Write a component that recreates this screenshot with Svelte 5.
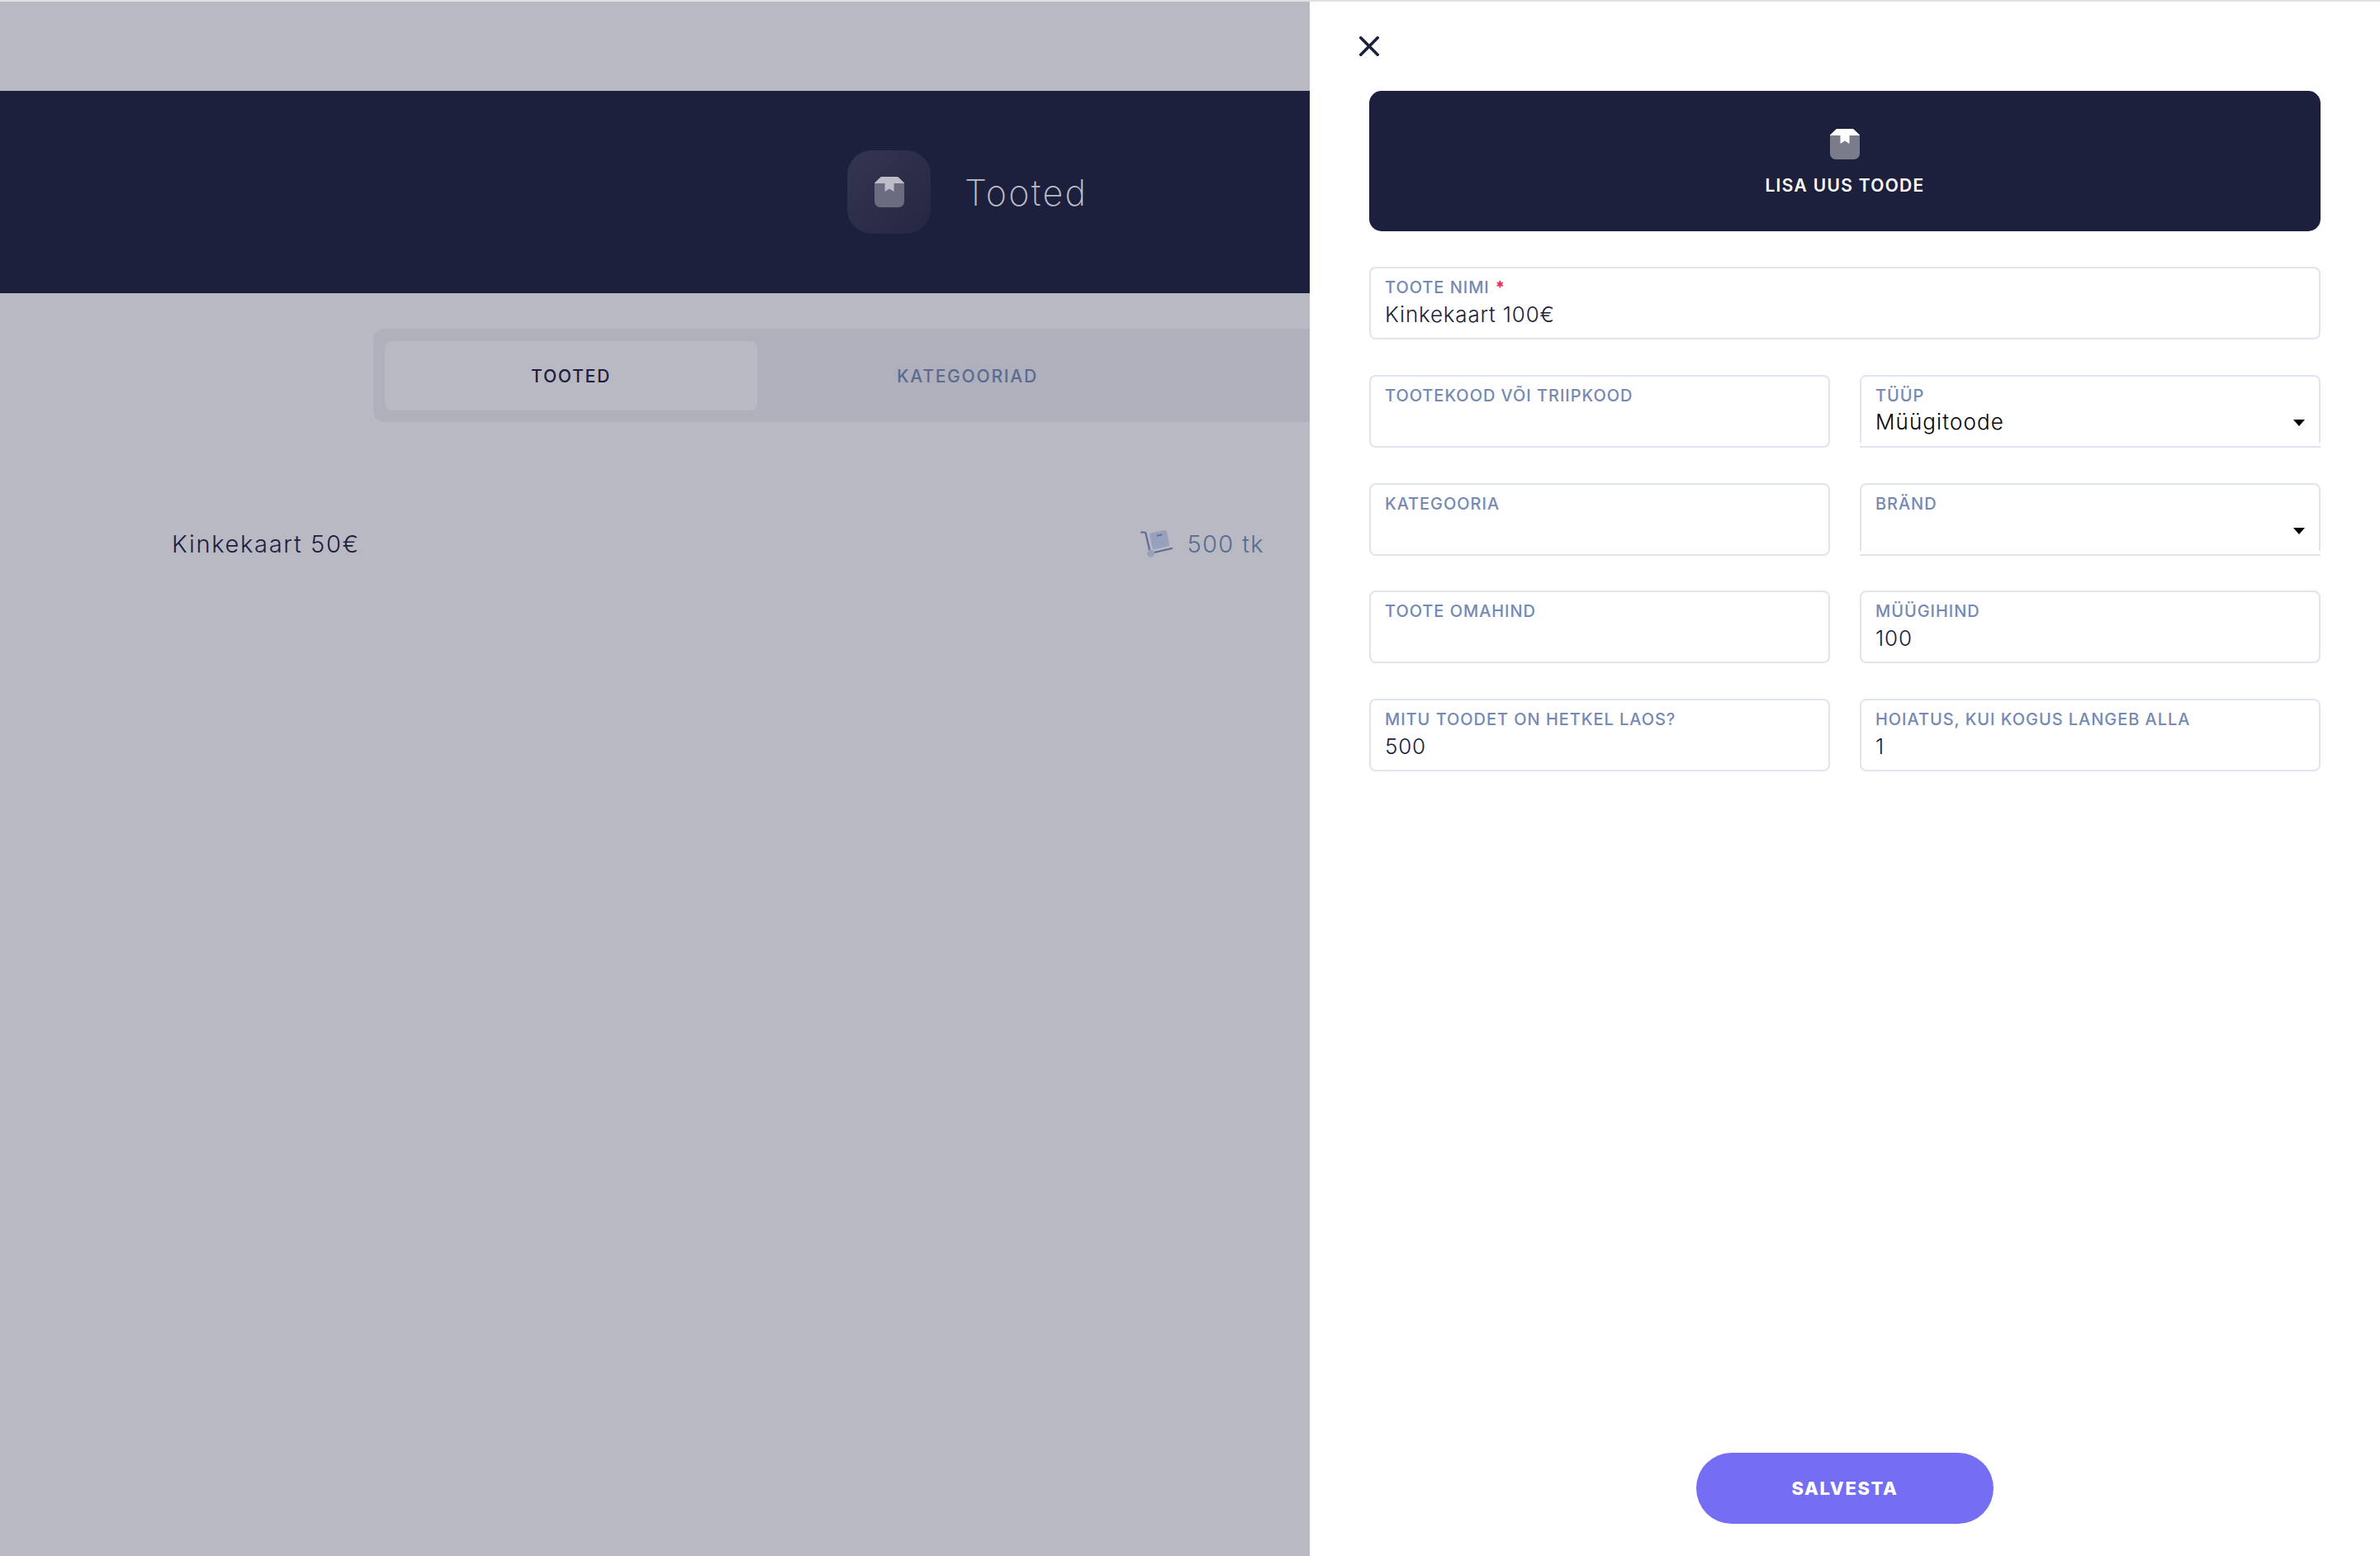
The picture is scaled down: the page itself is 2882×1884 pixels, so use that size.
<script lang="ts">
	const rows = [
		[{ label: 'TOOTE NIMI', value: 'Kinkekaart 100€', required: true, wide: true }],
		[
			{ label: 'TOOTEKOOD VÕI TRIIPKOOD', value: '' },
			{ label: 'TÜÜP', value: 'Müügitoode', select: true }
		],
		[
			{ label: 'KATEGOORIA', value: '' },
			{ label: 'BRÄND', value: '', select: true }
		],
		[
			{ label: 'TOOTE OMAHIND', value: '' },
			{ label: 'MÜÜGIHIND', value: '100' }
		],
		[
			{ label: 'MITU TOODET ON HETKEL LAOS?', value: '500' },
			{ label: 'HOIATUS, KUI KOGUS LANGEB ALLA', value: '1' }
		]
	];
</script>

{#snippet boxIcon(body, lid)}
	<svg class="box" viewBox="0 0 36 37" aria-hidden="true">
		<path d="M0 8h36v22a7 7 0 0 1-7 7H7a7 7 0 0 1-7-7z" fill={body} />
		<path d="M9 0h18a3 3 0 0 1 2.300 1L36 7.500V8H23.500v10l-5.500-3.500L12.500 18V8H0v-.5L6.700 1A3 3 0 0 1 9 0z" fill={lid} />
	</svg>
{/snippet}

<div class="screen">
	<main class="page">
		<header class="hero">
			<div class="tile">{@render boxIcon('#6b6c80', '#bdbdc9')}</div>
			<h1>Tooted</h1>
		</header>

		<nav class="tabs">
			<button class="tab active">TOOTED</button>
			<button class="tab">KATEGOORIAD</button>
		</nav>

		<div class="product">
			<span class="name">Kinkekaart 50€</span>
			<span class="stock">
				<svg viewBox="0 0 40 33" width="40" height="33" aria-hidden="true">
					<rect x="12.500" y="1.500" width="21" height="20" rx="2.500" transform="rotate(-12 23 11)" fill="#97a1bb" />
					<path d="M20.500 6.500l5-1" stroke="#5f7096" stroke-width="2" stroke-linecap="round" />
					<path d="M1 2.500h3.500a2 2 0 0 1 2 1.600L11.500 26M14 27.500L38 22" fill="none" stroke="#5a6c94" stroke-width="2.200" stroke-linecap="round" />
					<circle cx="12.500" cy="28" r="4.500" fill="#97a1bb" />
				</svg>
				<span class="qty">500 tk</span>
			</span>
		</div>
	</main>

	<aside class="drawer">
		<button class="close" aria-label="Sulge">
			<svg viewBox="0 0 24 24" width="24" height="24" aria-hidden="true">
				<path d="M1.800 1.800l20.400 20.400M22.200 1.800L1.800 22.200" stroke="#1c2040" stroke-width="3.600" stroke-linecap="round" />
			</svg>
		</button>

		<div class="banner">
			{@render boxIcon('#7a7c8c', '#ffffff')}
			<span>LISA UUS TOODE</span>
		</div>

		<form class="form">
			{#each rows as row}
				<div class="row">
					{#each row as field}
						<div class="field" class:select={field.select}>
							<span class="label">
								{field.label}{#if field.required}<b class="star">*</b>{/if}
							</span>
							<span class="value">{field.value}</span>
							{#if field.select}<i class="arrow"></i>{/if}
						</div>
					{/each}
				</div>
			{/each}
		</form>

		<button class="save">SALVESTA</button>
	</aside>
</div>

<style>
	:global(body) {
		margin: 0;
		background: #b9b9c4;
	}

	.screen {
		display: flex;
		width: 2882px;
		height: 1884px;
		box-sizing: border-box;
		border-top: 2px solid #e0e0e0;
		overflow: hidden;
		font-family: Inter, 'Noto Sans', sans-serif;
		color: #1c203d;
	}

	button {
		font-family: inherit;
		border: 0;
		padding: 0;
		background: none;
	}

	.page {
		width: 1586px;
		flex: none;
		overflow: hidden;
		background: #b9b9c4;
		padding-top: 108px;
		box-sizing: border-box;
	}

	.hero {
		height: 245px;
		background: #1c203d;
		display: flex;
		align-items: center;
		padding: 0 0 0 1026px;
		box-sizing: border-box;
		gap: 41px;
	}

	.tile {
		width: 101px;
		height: 101px;
		border-radius: 30px;
		background: linear-gradient(135deg, #34354f, #252642);
		display: flex;
		align-items: center;
		justify-content: center;
	}

	.box {
		width: 36px;
		height: 37px;
		display: block;
	}

	h1 {
		margin: 0;
		font-size: 43px;
		font-weight: 200;
		color: #bdbdc9;
		letter-spacing: 2.300px;
	}

	.tabs {
		display: flex;
		gap: 29px;
		width: 1200px;
		height: 113px;
		box-sizing: border-box;
		margin: 43px 0 0 452px;
		padding: 15px 14px 14px;
		border-radius: 14px;
		background: #afb0bc;
	}

	.tab {
		width: 451px;
		flex: none;
		border-radius: 8px;
		font-size: 21px;
		font-weight: 500;
		letter-spacing: 1.800px;
		color: #5a6b90;
	}

	.tab.active {
		background: #b9b9c4;
		color: #1c203d;
	}

	.product {
		display: flex;
		justify-content: space-between;
		align-items: center;
		margin-top: 125px;
		padding: 0 55px 0 208px;
		font-size: 29px;
		font-weight: 350;
		height: 44px;
	}

	.name {
		letter-spacing: 1.700px;
	}

	.stock {
		display: flex;
		align-items: center;
		gap: 16px;
		color: #5a6b90;
	}

	.qty {
		letter-spacing: 1.400px;
		font-weight: 300;
	}

	.drawer {
		flex: 1;
		position: relative;
		display: flex;
		flex-direction: column;
		background: #fff;
		box-sizing: border-box;
		padding: 108px 72px 39px;
	}

	.close {
		position: absolute;
		left: 60px;
		top: 42px;
		width: 24px;
		height: 24px;
	}

	.close svg {
		display: block;
	}

	.banner {
		height: 170px;
		flex: none;
		border-radius: 15px;
		background: #1c203d;
		color: #fff;
		display: flex;
		flex-direction: column;
		align-items: center;
		padding-top: 46px;
		box-sizing: border-box;
		gap: 19px;
	}

	.banner span {
		font-size: 21px;
		font-weight: 600;
		line-height: 26px;
		letter-spacing: 1.300px;
	}

	.form {
		display: flex;
		flex-direction: column;
		gap: 42.750px;
		margin-top: 43px;
	}

	.row {
		display: flex;
		gap: 36px;
	}

	.field {
		flex: 1;
		position: relative;
		height: 88px;
		box-sizing: border-box;
		border: 2px solid #e0e4ef;
		border-radius: 8px;
		padding: 10px 17px 0;
		display: flex;
		flex-direction: column;
	}

	.field.select::after {
		content: '';
		position: absolute;
		left: -2px;
		right: -2px;
		bottom: -2px;
		height: 6px;
		background: #fff;
		border-bottom: 2px solid #e0e4ef;
		box-sizing: border-box;
	}

	.label {
		font-size: 20px;
		line-height: 26px;
		font-weight: 500;
		color: #7489b3;
		letter-spacing: 0.950px;
	}

	.star {
		color: #f0245e;
		margin-left: 7px;
		font-weight: 700;
	}

	.value {
		font-size: 26px;
		line-height: 34px;
		margin-top: 3px;
		color: #1c203d;
		font-weight: 350;
		letter-spacing: 0.800px;
	}

	.select .value {
		color: #000;
		margin-top: 2px;
		letter-spacing: 1.100px;
	}

	.arrow {
		position: absolute;
		right: 17px;
		top: 52px;
		border: 7px solid transparent;
		border-top: 8px solid #000;
		border-bottom: 0;
	}

	.save {
		margin: auto auto 0;
		width: 360px;
		height: 86px;
		flex: none;
		border-radius: 43px;
		background: #756ef5;
		color: #fff;
		font-size: 22px;
		font-weight: 800;
		letter-spacing: 1.600px;
	}
</style>
